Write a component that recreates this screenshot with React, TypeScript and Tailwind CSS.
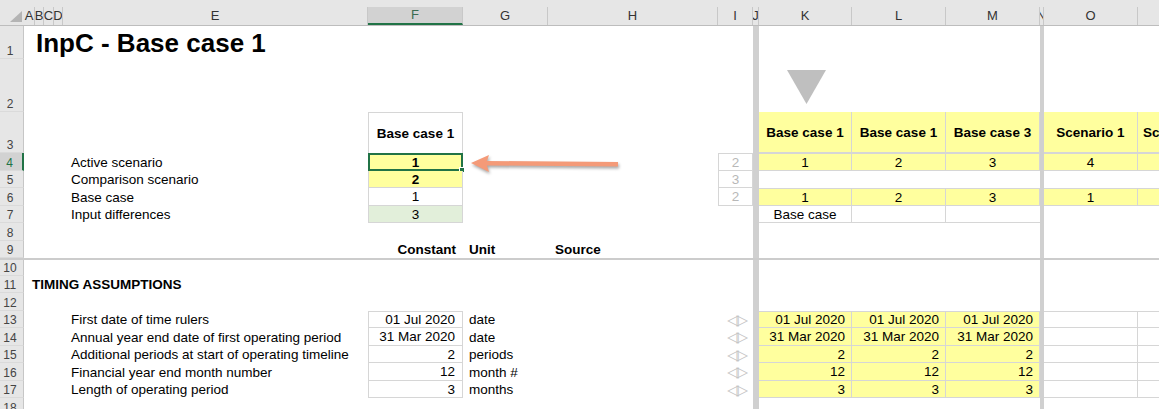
import React from "react";

type Cell = { t?: React.ReactNode; c?: string; sel?: boolean };

const COLS: { k: string; w: string }[] = [
  { k: "A", w: "w-[11px]" },
  { k: "B", w: "w-[9px]" },
  { k: "C", w: "w-[10px]" },
  { k: "D", w: "w-[9px]" },
  { k: "E", w: "w-[305px]" },
  { k: "F", w: "w-[95px]" },
  { k: "G", w: "w-[85px]" },
  { k: "H", w: "w-[170px]" },
  { k: "I", w: "w-[35px]" },
  { k: "J", w: "w-[6px]" },
  { k: "K", w: "w-[93px]" },
  { k: "L", w: "w-[94px]" },
  { k: "M", w: "w-[94px]" },
  { k: "N", w: "w-[4px]" },
  { k: "O", w: "w-[94px]" },
  { k: "P", w: "w-[78px]" },
  { k: "Q", w: "w-[94px]" },
];

const Y = "bg-[#ffff9e]";
const BD = "border-[#d6d6d6]";
const yellowCell = `${Y} ${BD} border-r border-b justify-center`;
const yellowNum = `${Y} ${BD} border-r border-b justify-end pr-[6px]`;
const grayIdx = `${BD} border-x border-b justify-center text-[#b8b8b8]`;
const fBox = `${BD} border-x border-b`;
const label = "pl-[8px]";

function RowHead({ n, sel }: { n: number; sel?: boolean }) {
  return (
    <div
      className={`w-[24px] shrink-0 h-full flex items-end justify-center pr-[3px] pb-[1px] text-[12px] leading-none border-b border-[#dadada] ${
        sel
          ? "bg-[#d2d2d2] text-[#217346] border-r-2 border-r-[#217346]"
          : "bg-[#e6e6e6] text-[#444] border-r border-r-[#c6c6c6]"
      }`}
    >
      {n}
    </div>
  );
}

function Row({
  n,
  h,
  cells = {},
  sel,
}: {
  n: number;
  h: string;
  cells?: Record<string, Cell>;
  sel?: boolean;
}) {
  return (
    <div className={`flex ${h} shrink-0`}>
      <RowHead n={n} sel={sel} />
      {COLS.map((col) => {
        const s = cells[col.k];
        const split = col.k === "J" || col.k === "N";
        return (
          <div
            key={col.k}
            className={`${col.w} shrink-0 h-full flex items-center pt-[2px] whitespace-nowrap relative ${
              split ? "bg-[#d0d0d0]" : ""
            } ${s?.c ?? ""}`}
          >
            {s?.t}
            {s?.sel && (
              <>
                <div className="absolute -inset-[1px] border-2 border-[#217346]" />
                <div className="absolute -right-[3px] -bottom-[3px] w-[6px] h-[6px] bg-[#217346] border border-white" />
              </>
            )}
          </div>
        );
      })}
    </div>
  );
}

const arrows = (
  <span
    className="text-[#c4c4c4] text-[15px] leading-none tracking-[-2px]"
    style={{ fontFamily: '"DejaVu Sans", sans-serif' }}
  >
    ◁▷
  </span>
);

export default function App() {
  const dataRows: [number, string, string, string, string][] = [
    [13, "First date of time rulers", "01 Jul 2020", "date", "01 Jul 2020"],
    [14, "Annual year end date of first operating period", "31 Mar 2020", "date", "31 Mar 2020"],
    [15, "Additional periods at start of operating timeline", "2", "periods", "2"],
    [16, "Financial year end month number", "12", "month #", "12"],
    [17, "Length of operating period", "3", "months", "3"],
  ];

  return (
    <div
      className="w-[1159px] h-[409px] overflow-hidden bg-white relative flex flex-col text-[13.5px] text-black"
      style={{ fontFamily: '"Liberation Sans", Arial, sans-serif' }}
    >
      {/* Column header */}
      <div className="flex h-[26px] shrink-0 bg-[#e6e6e6] border-b border-[#bdbdbd] items-end">
        <div className="w-[24px] shrink-0 h-full flex items-end justify-end pr-[1px] pb-[2px]">
          <svg width="14" height="12" viewBox="0 0 14 12">
            <polygon points="13,0 13,11 1,11" fill="#b4b4b4" />
          </svg>
        </div>
        {COLS.map((col) => {
          const sel = col.k === "F";
          return (
            <div
              key={col.k}
              className={`${col.w} shrink-0 h-[18px] flex items-center justify-center overflow-hidden text-[13px] border-r border-[#c8c8c8] ${
                sel ? "bg-[#d2d2d2] text-[#3b6b50] border-b-2 border-b-[#217346]" : "text-[#333]"
              }`}
            >
              {col.k}
            </div>
          );
        })}
      </div>

      <Row
        n={1}
        h="h-[33px]"
        cells={{ B: { t: <span className="text-[26px] font-bold pl-[1px]">InpC - Base case 1</span> } }}
      />
      <Row
        n={2}
        h="h-[53px]"
        cells={{
          K: {
            c: "items-end pb-[8px] pl-[28px]",
            t: (
              <svg width="39" height="34" viewBox="0 0 39 34">
                <polygon points="0,0 39,0 19.5,34" fill="#bfbfbf" />
              </svg>
            ),
          },
        }}
      />
      <Row
        n={3}
        h="h-[41px]"
        cells={{
          F: { t: "Base case 1", c: `${BD} border border-b-0 justify-center font-bold` },
          K: { t: "Base case 1", c: `${yellowCell} font-bold` },
          L: { t: "Base case 1", c: `${yellowCell} font-bold` },
          M: { t: "Base case 3", c: `${yellowCell} font-bold` },
          O: { t: "Scenario 1", c: `${yellowCell} font-bold` },
          P: { t: "Scenario 2", c: `${yellowCell} font-bold justify-start pl-[5px]` },
          Q: { c: `${yellowCell}` },
        }}
      />
      <Row
        n={4}
        h="h-[17.5px]"
        sel
        cells={{
          E: { t: "Active scenario", c: label },
          F: { t: "1", c: `${fBox} border-t ${Y} justify-center font-bold`, sel: true },
          I: { t: "2", c: `${grayIdx} border-t` },
          K: { t: "1", c: `${yellowCell} border-t` },
          L: { t: "2", c: `${yellowCell} border-t` },
          M: { t: "3", c: `${yellowCell} border-t` },
          O: { t: "4", c: `${yellowCell} border-t` },
          P: { c: `${yellowCell} border-t` },
          Q: { c: `${yellowCell} border-t` },
        }}
      />
      <Row
        n={5}
        h="h-[17.5px]"
        cells={{
          E: { t: "Comparison scenario", c: label },
          F: { t: "2", c: `${fBox} ${Y} justify-center font-bold` },
          I: { t: "3", c: grayIdx },
        }}
      />
      <Row
        n={6}
        h="h-[17.5px]"
        cells={{
          E: { t: "Base case", c: label },
          F: { t: "1", c: `${fBox} justify-center` },
          I: { t: "2", c: grayIdx },
          K: { t: "1", c: `${yellowCell} border-t` },
          L: { t: "2", c: `${yellowCell} border-t` },
          M: { t: "3", c: `${yellowCell} border-t` },
          O: { t: "1", c: `${yellowCell} border-t` },
          P: { c: `${yellowCell} border-t` },
          Q: { c: `${yellowCell} border-t` },
        }}
      />
      <Row
        n={7}
        h="h-[17.5px]"
        cells={{
          E: { t: "Input differences", c: label },
          F: { t: "3", c: `${fBox} bg-[#e2efda] justify-center` },
          K: { t: "Base case", c: `${BD} border-r border-b justify-center` },
          L: { c: `${BD} border-r border-b` },
          M: { c: `${BD} border-b` },
        }}
      />
      <Row n={8} h="h-[17.5px]" />
      <Row
        n={9}
        h="h-[17.5px]"
        cells={{
          F: { t: "Constant", c: "justify-end pr-[7px] font-bold" },
          G: { t: "Unit", c: "pl-[6px] font-bold" },
          H: { t: "Source", c: "pl-[7px] font-bold" },
        }}
      />
      <div className="h-[2px] shrink-0 bg-[#cccccc]" />
      <Row n={10} h="h-[15.5px]" />
      <Row
        n={11}
        h="h-[17.5px]"
        cells={{ A: { t: <span className="font-bold pl-[8px]">TIMING ASSUMPTIONS</span> } }}
      />
      <Row n={12} h="h-[17.5px]" />
      {dataRows.map(([n, lab, val, unit, kv], i) => (
        <Row
          key={n}
          n={n}
          h="h-[17.5px]"
          cells={{
            E: { t: lab, c: label },
            F: { t: val, c: `${fBox} ${i === 0 ? "border-t" : ""} justify-end pr-[7px]` },
            G: { t: unit, c: "pl-[6px]" },
            I: { t: arrows, c: "justify-center pl-[2px]" },
            K: { t: kv, c: `${yellowNum} ${i === 0 ? "border-t" : ""}` },
            L: { t: kv, c: `${yellowNum} ${i === 0 ? "border-t" : ""}` },
            M: { t: kv, c: `${yellowNum} ${i === 0 ? "border-t" : ""}` },
            O: { c: `${BD} border-r border-b ${i === 0 ? "border-t" : ""}` },
            P: { c: `${BD} border-r border-b ${i === 0 ? "border-t" : ""}` },
            Q: { c: `${BD} border-r border-b ${i === 0 ? "border-t" : ""}` },
          }}
        />
      ))}
      <Row n={18} h="h-[17.5px]" />

      {/* Orange callout arrow */}
      <svg
        className="absolute left-[462px] top-[149px]"
        width="170"
        height="32"
        viewBox="0 0 170 32"
        style={{ filter: "drop-shadow(1px 2px 1.5px rgba(0,0,0,0.35))" }}
      >
        <path d="M9 14 L27 6 L25 12 L156 13 L156 17.5 L25 16.5 L27 23 Z" fill="#f49a78" />
      </svg>
    </div>
  );
}
